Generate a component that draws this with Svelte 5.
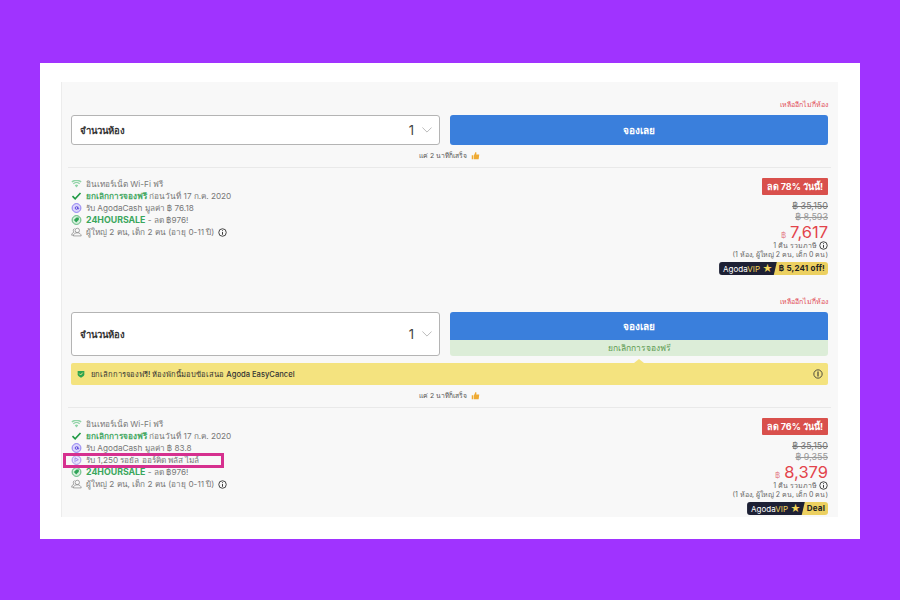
<script lang="ts">
	type Offer = {
		easyCancel: boolean;
		cash: string;
		miles: string;
		percent: string;
		oldPrices: string[];
		price: string;
		vip: string;
	};

	const offers: Offer[] = [
		{
			easyCancel: false,
			cash: '76.18',
			miles: '',
			percent: '78',
			oldPrices: ['฿ 35,150', '฿ 8,593'],
			price: '7,617',
			vip: '฿ 5,241 off!'
		},
		{
			easyCancel: true,
			cash: '83.8',
			miles: '1,250',
			percent: '76',
			oldPrices: ['฿ 35,150', '฿ 9,355'],
			price: '8,379',
			vip: 'Deal'
		}
	];
</script>

{#snippet info()}
	<svg class="info" viewBox="0 0 12 12" width="9" height="9">
		<circle cx="6" cy="6" r="5" fill="none" stroke="#333" stroke-width="1.2" />
		<path d="M6 3v1.2M6 5.4V9" stroke="#333" stroke-width="1.3" />
	</svg>
{/snippet}

<div class="stage">
	<div class="card">
		<div class="panel">
			{#each offers as offer}
				<section class="offer">
					<div class="left-rooms">เหลืออีกไม่กี่ห้อง</div>
					<div class="action-row" class:tall={offer.easyCancel}>
						<div class="select">
							<span class="select-label">จำนวนห้อง</span>
							<span class="select-value">1</span>
							<svg viewBox="0 0 12 7" width="10" height="6">
								<path d="M.5.5 6 6l5.500-5.500" fill="none" stroke="#999" stroke-width=".8" />
							</svg>
						</div>
						<div class="book">
							<div class="book-btn">จองเลย</div>
							{#if offer.easyCancel}
								<div class="free-cancel">ยกเลิกการจองฟรี</div>
							{/if}
						</div>
					</div>
					{#if offer.easyCancel}
						<div class="easy">
							<span class="notch"></span>
							<svg viewBox="0 0 12 12" width="8" height="8">
								<path d="M1 1.500h10v5c0 2.500-2.500 4-5 5-2.500-1-5-2.500-5-5z" fill="#2fa44f" />
								<path d="M3.500 5.500 5.500 7.500 8.500 4" fill="none" stroke="#f4e37f" stroke-width="1.400" />
							</svg>
							<span class="easy-text">ยกเลิกการจองฟรี! ห้องพักนี้มอบข้อเสนอ Agoda EasyCancel</span>
							<svg class="easy-info" viewBox="0 0 12 12" width="10" height="10">
								<circle cx="6" cy="6" r="5" fill="none" stroke="#333" stroke-width="1" />
								<path d="M6 3v6" stroke="#333" stroke-width="1.300" />
							</svg>
						</div>
					{/if}
					<div class="quick">
						แค่ 2 นาทีก็เสร็จ
						<svg viewBox="0 0 12 12" width="9" height="9">
							<path d="M1 5.500h2.200V11H1zM4 5.500 6 1.200c1.200 0 1.500 1 1.200 2L6.900 4.500H11l-.8 6.500H4z" fill="#eeaa33" />
						</svg>
					</div>

					<div class="details">
						<div class="features">
							<div class="line">
								<svg viewBox="0 0 14 10" width="11" height="8">
									<path d="M7 9.500 4.800 6.800a3 3 0 0 1 4.400 0zM3.600 5.400 2.400 4a7 7 0 0 1 9.200 0l-1.200 1.400a5 5 0 0 0-6.800 0zM1.700 3.200.5 1.800a10 10 0 0 1 13 0l-1.200 1.400a8 8 0 0 0-10.600 0z" fill="#8fd3a6" />
								</svg>
								<span>อินเทอร์เน็ต Wi-Fi ฟรี</span>
							</div>
							<div class="line">
								<svg viewBox="0 0 12 10" width="10" height="8">
									<path d="M1 5.200 4.300 8.500 11 1.300" fill="none" stroke="#1f9a45" stroke-width="2" />
								</svg>
								<span><b class="green-soft">ยกเลิกการจองฟรี</b> ก่อนวันที่ 17 ก.ค. 2020</span>
							</div>
							<div class="line">
								<svg viewBox="0 0 12 12" width="10" height="10">
									<circle cx="6" cy="6" r="5.300" fill="#dcd6fb" stroke="#6f5cf0" stroke-width=".9" />
									<circle cx="6" cy="6" r="1.600" fill="none" stroke="#4d3bd6" stroke-width="1" />
									<path d="M7.600 4.300v2.500c0 .9 1.200.8 1.200-.6" fill="none" stroke="#4d3bd6" stroke-width=".9" />
								</svg>
								<span>รับ AgodaCash มูลค่า ฿ {offer.cash}</span>
							</div>
							{#if offer.miles}
								<div class="line">
									<svg viewBox="0 0 12 12" width="10" height="10">
										<circle cx="6" cy="6" r="5.300" fill="#e9e4fb" stroke="#8a78ea" stroke-width=".9" />
										<path d="M4.200 8.800V3.400l4 2.200-3 1.600" fill="none" stroke="#8a78ea" stroke-width=".9" />
									</svg>
									<span>รับ {offer.miles} รอยัล ออร์คิด พลัส ไมล์</span>
								</div>
							{/if}
							<div class="line">
								<svg viewBox="0 0 12 12" width="10" height="10">
									<circle cx="6" cy="6" r="5.300" fill="#d6efdc" stroke="#2fa458" stroke-width=".9" />
									<path d="M2.800 6 6 3h2.800v2.800L5.700 9z" fill="#2fa458" />
								</svg>
								<span><b class="sale">24HOURSALE</b> - ลด ฿976!</span>
							</div>
							<div class="line">
								<svg viewBox="0 0 14 12" width="11" height="10">
									<circle cx="8" cy="4" r="2.800" fill="none" stroke="#777" stroke-width=".8" />
									<path d="M3 11c.3-2.800 2.300-4 5-4s4.700 1.200 5 4zM4.500 1.600a2.700 2.700 0 0 0-.6 4.600C2 6.800 1 8 .8 10H3" fill="none" stroke="#777" stroke-width=".8" />
								</svg>
								<span>ผู้ใหญ่ 2 คน, เด็ก 2 คน (อายุ 0-11 ปี)</span>
								{@render info()}
							</div>
							{#if offer.miles}
								<span class="highlight"></span>
							{/if}
						</div>

						<div class="pricing">
							<div class="discount">ลด {offer.percent}% วันนี้!</div>
							<div class="old first">{offer.oldPrices[0]}</div>
							<div class="old">{offer.oldPrices[1]}</div>
							<div class="price"><small>฿</small>{offer.price}</div>
							<div class="note with-info">1 คืน รวมภาษี {@render info()}</div>
							<div class="note">(1 ห้อง, ผู้ใหญ่ 2 คน, เด็ก 0 คน)</div>
							<div class="vip">
								<span class="vip-dark">Agoda<em>VIP</em> <i>★</i></span>
								<span class="vip-gold">{offer.vip}</span>
							</div>
						</div>
					</div>
				</section>
			{/each}
		</div>
	</div>
</div>

<style>
	:global(body) {
		background: #a033ff;
	}

	.stage {
		width: 900px;
		height: 600px;
		padding-top: 63px;
		box-sizing: border-box;
		font-family: Inter, "Noto Sans", sans-serif;
		color: #666;
	}

	.card {
		width: 820px;
		height: 476px;
		margin-left: 40px;
		padding: 19px 22px 22px 21px;
		box-sizing: border-box;
		background: #fff;
	}

	.panel {
		height: 435px;
		overflow: hidden;
		background: #f8f8f8;
		border-left: 1px solid #ececec;
		padding: 0 10px 0 9px;
	}

	.offer {
		height: 199px;
		padding-top: 18px;
		box-sizing: border-box;
	}

	.offer:nth-child(2) {
		height: 236px;
		padding-top: 16px;
	}

	.left-rooms {
		text-align: right;
		font-size: 7px;
		line-height: 10px;
		color: #e2505a;
		margin-bottom: 5px;
	}

	.action-row {
		display: flex;
		gap: 10px;
		height: 30px;
	}

	.action-row.tall {
		height: 44px;
	}

	.select {
		width: 369px;
		box-sizing: border-box;
		display: flex;
		align-items: center;
		padding: 0 7px 0 8px;
		background: #fff;
		border: 1px solid #b4b4b4;
		border-radius: 3px;
	}

	.select-label {
		font-size: 9.500px;
		font-weight: 700;
		color: #333;
		flex: 1;
	}

	.select-value {
		font-size: 13px;
		color: #444;
		margin-right: 8px;
	}

	.book {
		flex: 1;
		display: flex;
		flex-direction: column;
		border-radius: 3px;
		overflow: hidden;
	}

	.book-btn {
		flex: 1;
		display: flex;
		align-items: center;
		justify-content: center;
		background: #3a7fdc;
		color: #fff;
		font-size: 10px;
		font-weight: 700;
	}

	.free-cancel {
		height: 16px;
		line-height: 16px;
		text-align: center;
		background: #dcedd8;
		color: #5e9a52;
		font-size: 8.500px;
	}

	.easy {
		position: relative;
		display: flex;
		align-items: center;
		gap: 6px;
		height: 22px;
		margin-top: 7px;
		padding: 0 5px 0 6px;
		background: #f4e37f;
		border-radius: 2px;
		color: #333;
		font-size: 7.600px;
	}

	.easy-text {
		flex: 1;
		font-weight: 500;
	}

	.notch {
		position: absolute;
		left: 563px;
		top: -4px;
		border-left: 5px solid transparent;
		border-right: 5px solid transparent;
		border-bottom: 4px solid #f4e37f;
	}

	.quick {
		display: flex;
		align-items: center;
		justify-content: center;
		gap: 4px;
		height: 11px;
		margin-top: 5px;
		font-size: 6.800px;
		color: #555;
	}

	.details {
		display: flex;
		justify-content: space-between;
		margin: 6px -3px 0 -3px;
		padding: 10px 3px 0 3px;
		border-top: 1px solid #e9e9e9;
	}

	.features {
		position: relative;
	}

	.line {
		display: flex;
		align-items: center;
		gap: 4px;
		height: 12px;
		font-size: 8.200px;
		color: #777;
		white-space: nowrap;
	}

	.line svg:first-child {
		width: 11px;
		flex: none;
	}

	.green-soft {
		color: #46a864;
		font-weight: 600;
	}

	.sale {
		color: #3aa65c;
		font-weight: 700;
		font-size: 8.800px;
	}

	.highlight {
		position: absolute;
		left: -8px;
		top: 35px;
		width: 161px;
		height: 15px;
		box-sizing: border-box;
		border: 3px solid #d6308f;
	}

	.pricing {
		display: flex;
		flex-direction: column;
		align-items: flex-end;
		text-align: right;
	}

	.discount {
		height: 17px;
		line-height: 17px;
		padding: 0 5px;
		background: #d9504c;
		border-radius: 1px;
		color: #fff;
		font-size: 9px;
		font-weight: 700;
	}

	.old {
		font-size: 9px;
		line-height: 11px;
		color: #999;
		text-decoration: line-through;
	}

	.old.first {
		margin-top: 5px;
		color: #777;
	}

	.price {
		font-size: 16.500px;
		line-height: 20px;
		color: #e3444b;
	}

	.price small {
		font-size: 8px;
		color: #e58790;
		margin-right: 4px;
	}

	.note {
		font-size: 7px;
		line-height: 9px;
		color: #666;
	}

	.with-info {
		display: flex;
		align-items: center;
		gap: 2px;
		height: 9px;
		margin-top: -4px;
	}

	.vip {
		display: flex;
		height: 13px;
		margin-top: 3px;
		border-radius: 3px;
		overflow: hidden;
		font-size: 8px;
		line-height: 13px;
	}

	.vip-dark {
		padding: 0 4px;
		background: #1d2034;
		color: #fff;
		clip-path: polygon(0 0, 100% 0, calc(100% - 3px) 100%, 0 100%);
		margin-right: -3px;
	}

	.vip-dark em {
		font-style: normal;
		color: #f1d45a;
	}

	.vip-dark i {
		font-style: normal;
		font-size: 10px;
		color: #f1d45a;
	}

	.vip-gold {
		padding: 0 3px 0 5px;
		background: #ecd060;
		color: #222;
		font-weight: 700;
		letter-spacing: .2px;
	}
</style>
